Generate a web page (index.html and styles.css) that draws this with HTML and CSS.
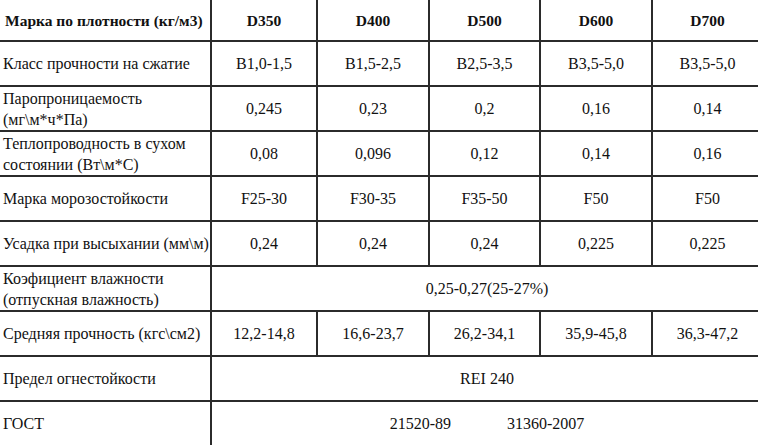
FILE: index.html
```html
<!DOCTYPE html>
<html lang="ru">
<head>
<meta charset="utf-8">
<title>Характеристики газобетона</title>
<link rel="stylesheet" href="styles.css">
</head>
<body>
<table class="spec">
  <colgroup>
    <col class="c-name">
    <col class="c1">
    <col class="c2">
    <col class="c3">
    <col class="c4">
    <col class="c5">
  </colgroup>
  <tr class="head">
    <th class="name">Марка по плотности (кг/м3)</th>
    <th>D350</th>
    <th>D400</th>
    <th>D500</th>
    <th>D600</th>
    <th>D700</th>
  </tr>
  <tr>
    <td class="name">Класс прочности на сжатие</td>
    <td>B1,0-1,5</td>
    <td>B1,5-2,5</td>
    <td>B2,5-3,5</td>
    <td>B3,5-5,0</td>
    <td>B3,5-5,0</td>
  </tr>
  <tr>
    <td class="name">Паропроницаемость<br>(мг\м*ч*Па)</td>
    <td>0,245</td>
    <td>0,23</td>
    <td>0,2</td>
    <td>0,16</td>
    <td>0,14</td>
  </tr>
  <tr>
    <td class="name">Теплопроводность в сухом<br>состоянии (Вт\м*С)</td>
    <td>0,08</td>
    <td>0,096</td>
    <td>0,12</td>
    <td>0,14</td>
    <td>0,16</td>
  </tr>
  <tr>
    <td class="name">Марка морозостойкости</td>
    <td>F25-30</td>
    <td>F30-35</td>
    <td>F35-50</td>
    <td>F50</td>
    <td>F50</td>
  </tr>
  <tr>
    <td class="name">Усадка при высыхании (мм\м)</td>
    <td>0,24</td>
    <td>0,24</td>
    <td>0,24</td>
    <td>0,225</td>
    <td>0,225</td>
  </tr>
  <tr>
    <td class="name">Коэфициент влажности<br>(отпускная влажность)</td>
    <td colspan="5">0,25-0,27(25-27%)</td>
  </tr>
  <tr>
    <td class="name">Средняя прочность (кгс\см2)</td>
    <td>12,2-14,8</td>
    <td>16,6-23,7</td>
    <td>26,2-34,1</td>
    <td>35,9-45,8</td>
    <td>36,3-47,2</td>
  </tr>
  <tr>
    <td class="name">Предел огнестойкости</td>
    <td colspan="5">REI 240</td>
  </tr>
  <tr>
    <td class="name">ГОСТ</td>
    <td colspan="5"><span class="gost">21520-89</span><span class="gost">31360-2007</span></td>
  </tr>
</table>
</body>
</html>
```

FILE: styles.css
```css
html, body {
  margin: 0;
  padding: 0;
  background: #ffffff;
  overflow: hidden;
}

body {
  width: 758px;
  height: 445px;
  font-family: "Liberation Serif", "Times New Roman", serif;
  font-size: 16px;
  color: #111111;
}

.spec {
  border-collapse: collapse;
  table-layout: fixed;
  width: 762px;
  border-style: hidden;
}

.c-name { width: 211px; }
.c1 { width: 106px; }
.c2 { width: 112px; }
.c3 { width: 111px; }
.c4 { width: 112px; }
.c5 { width: 110px; }

.spec th,
.spec td {
  border: 2px solid #2b2b2b;
  height: 43px;
  padding: 0 3px;
  text-align: center;
  vertical-align: middle;
  line-height: 21px;
  font-weight: normal;
  white-space: nowrap;
}

.spec .head th {
  height: 40px;
  font-size: 15.5px;
  font-weight: bold;
}

.spec .name {
  text-align: left;
}

.spec .head .name {
  padding-left: 5px;
}

.gost + .gost {
  margin-left: 56px;
}
```
